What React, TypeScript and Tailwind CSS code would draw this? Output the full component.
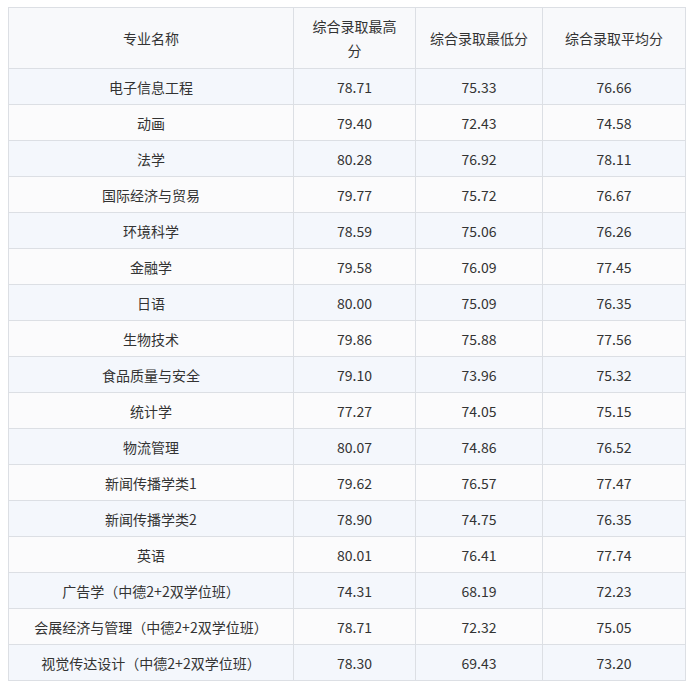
const rows: [string, string, string, string][] = [
  ["电子信息工程", "78.71", "75.33", "76.66"],
  ["动画", "79.40", "72.43", "74.58"],
  ["法学", "80.28", "76.92", "78.11"],
  ["国际经济与贸易", "79.77", "75.72", "76.67"],
  ["环境科学", "78.59", "75.06", "76.26"],
  ["金融学", "79.58", "76.09", "77.45"],
  ["日语", "80.00", "75.09", "76.35"],
  ["生物技术", "79.86", "75.88", "77.56"],
  ["食品质量与安全", "79.10", "73.96", "75.32"],
  ["统计学", "77.27", "74.05", "75.15"],
  ["物流管理", "80.07", "74.86", "76.52"],
  ["新闻传播学类1", "79.62", "76.57", "77.47"],
  ["新闻传播学类2", "78.90", "74.75", "76.35"],
  ["英语", "80.01", "76.41", "77.74"],
  ["广告学（中德2+2双学位班）", "74.31", "68.19", "72.23"],
  ["会展经济与管理（中德2+2双学位班）", "78.71", "72.32", "75.05"],
  ["视觉传达设计（中德2+2双学位班）", "78.30", "69.43", "73.20"],
];

const cell = "border border-[#dcdfe4] px-[14px] text-center align-middle";

export default function App() {
  return (
    <div className="min-h-screen bg-white pl-2 pt-[7px] font-['Noto_Sans_CJK_SC','Noto_Sans',sans-serif] text-[14px] leading-6 text-[#333] [text-spacing-trim:space-all]">
      <table className="w-[677px] table-fixed border-collapse">
        <colgroup>
          <col className="w-[285px]" />
          <col className="w-[122px]" />
          <col className="w-[127px]" />
          <col className="w-[143px]" />
        </colgroup>
        <thead>
          <tr className="h-[61px] bg-[#f8f9fb]">
            <th className={cell + " font-normal"}>专业名称</th>
            <th className={cell + " font-normal"}>综合录取最高分</th>
            <th className={cell + " font-normal"}>综合录取最低分</th>
            <th className={cell + " font-normal"}>综合录取平均分</th>
          </tr>
        </thead>
        <tbody>
          {rows.map((r, i) => (
            <tr key={r[0]} className={i % 2 === 0 ? "h-9 bg-[#f4f7fc]" : "h-9 bg-[#fbfbfc]"}>
              {r.map((v, j) => (
                <td key={j} className={cell}>
                  {v}
                </td>
              ))}
            </tr>
          ))}
        </tbody>
      </table>
    </div>
  );
}
